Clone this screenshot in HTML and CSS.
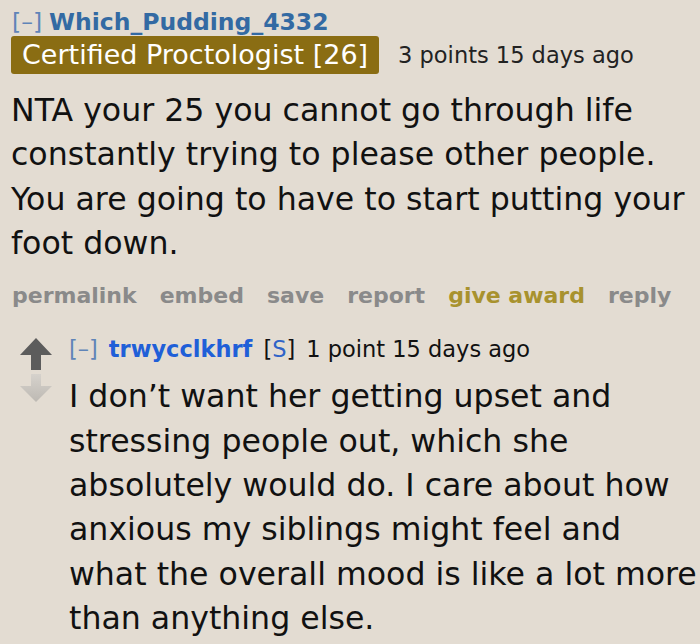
FILE: index.html
```html
<!DOCTYPE html>
<html>
<head>
<meta charset="utf-8">
<link rel="stylesheet" href="styles.css">
</head>
<body>
<div class="comment">
  <div class="tagline">
    <span class="expand">[–]</span>
    <span class="author">Which_Pudding_4332</span>
  </div>
  <div class="flairrow">
    <span class="flair">Certified Proctologist [26]</span>
    <span class="score">3 points 15 days ago</span>
  </div>
  <div class="md">NTA your 25 you cannot go through life<br>constantly trying to please other people.<br>You are going to have to start putting your<br>foot down.</div>
  <ul class="buttons">
    <li>permalink</li>
    <li>embed</li>
    <li>save</li>
    <li>report</li>
    <li class="award">give award</li>
    <li>reply</li>
  </ul>
  <div class="child">
    <div class="midcol">
      <svg class="arrow" width="34" height="32" viewBox="0 0 34 32"><path d="M17 0 L33 17 L22 17 L22 32 L12 32 L12 17 L1 17 Z" fill="#5c5c5c"/></svg>
      <svg class="arrow" width="34" height="28" viewBox="0 0 34 28"><defs><linearGradient id="dg" x1="0" y1="0" x2="0" y2="1"><stop offset="0" stop-color="#d6d2cc"/><stop offset="1" stop-color="#bdb9b3"/></linearGradient></defs><path d="M12 0 L22 0 L22 12 L33 12 L17 28 L1 12 L12 12 Z" fill="url(#dg)"/></svg>
    </div>
    <div class="entry">
      <div class="tagline2">
        <span class="expand2">[–]</span>
        <span class="author2">trwycclkhrf</span>
        <span class="sub">[<span class="s">S</span>]</span>
        <span class="score2">1 point 15 days ago</span>
      </div>
      <div class="md md2">I don’t want her getting upset and<br>stressing people out, which she<br>absolutely would do. I care about how<br>anxious my siblings might feel and<br>what the overall mood is like a lot more<br>than anything else.</div>
    </div>
  </div>
</div>
</body>
</html>
```

FILE: styles.css
```css
html, body {
  margin: 0;
  padding: 0;
  background: #e3dcd2;
}
body {
  width: 700px;
  height: 644px;
  overflow: hidden;
  font-family: "DejaVu Sans", Verdana, sans-serif;
}
.comment {
  padding: 8px 0 0 12px;
}
.tagline {
  font-size: 23.5px;
  line-height: 28px;
  display: flex;
  gap: 7px;
}
.expand {
  color: #5f84b8;
}
.author {
  color: #336aa3;
  font-weight: bold;
}
.flairrow {
  display: flex;
  align-items: center;
  gap: 19px;
  margin-left: -1px;
}
.flair {
  background: #8a6d13;
  color: #fff;
  font-size: 27px;
  line-height: 38px;
  padding: 0 11px;
  border-radius: 3px;
}
.score {
  color: #222;
  font-size: 22.5px;
}
.md {
  color: #111;
  font-size: 31.6px;
  line-height: 44.3px;
  margin-top: 14px;
  margin-left: -1px;
  white-space: nowrap;
}
.buttons {
  list-style: none;
  margin: 18px 0 0 0;
  padding: 0;
  display: flex;
  gap: 23px;
  font-size: 22px;
  font-weight: bold;
  color: #8a8a8a;
  white-space: nowrap;
}
.buttons .award {
  color: #a8922e;
}
.child {
  display: flex;
  margin-top: 27px;
  margin-left: 7px;
  gap: 16px;
}
.midcol {
  display: flex;
  flex-direction: column;
  gap: 4px;
  padding-top: 3px;
}
.arrow {
  display: block;
}
.tagline2 {
  font-size: 22.5px;
  line-height: 28px;
  display: flex;
  gap: 11px;
  color: #111;
  white-space: nowrap;
}
.expand2 {
  color: #5f84b8;
}
.author2 {
  color: #1f5fd8;
  font-weight: bold;
}
.sub .s {
  color: #2f63c8;
}
.md2 {
  margin-top: 11px;
  margin-left: 0;
  line-height: 44.4px;
}
```
